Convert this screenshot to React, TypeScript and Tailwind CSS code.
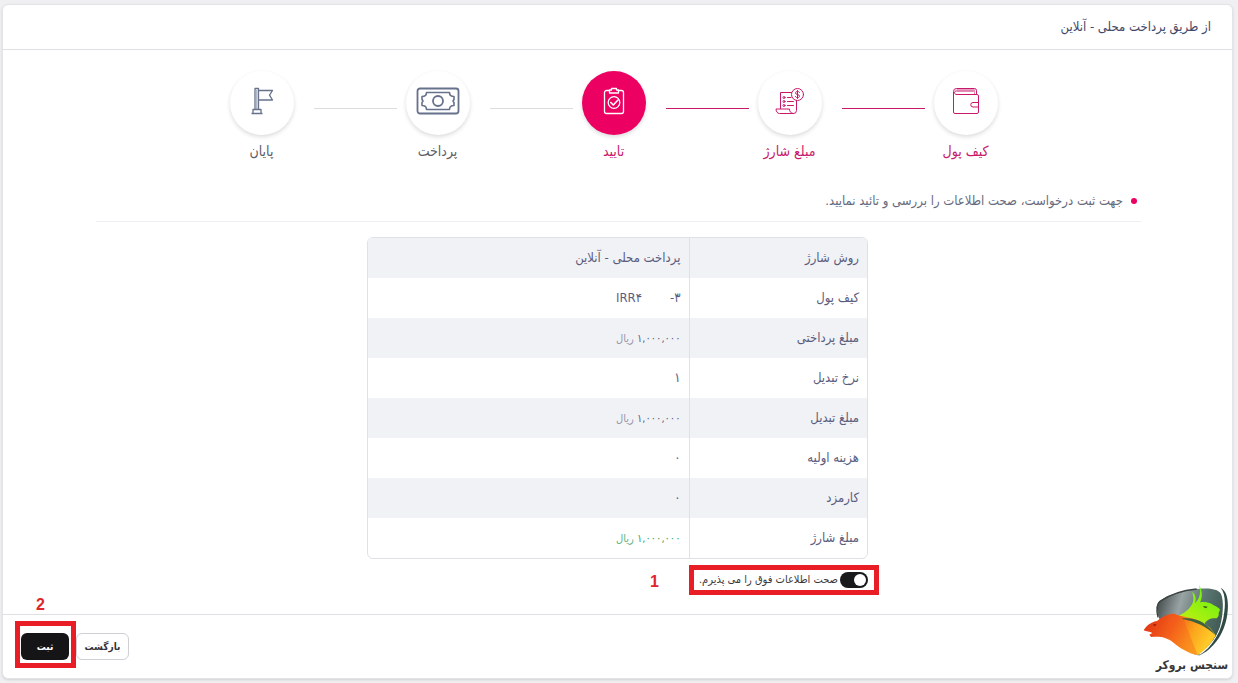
import { useState } from "react";

function WalletIcon() {
  return (
    <svg width="28" height="28" viewBox="0 0 28 28" fill="none" stroke="currentColor" strokeLinecap="round" strokeLinejoin="round">
      <path d="M24.500 6.500V3.500a2 2 0 0 0-2-2H4.500a3 3 0 0 0-3 3V25a1.500 1.500 0 0 0 1.500 1.500H25a1.500 1.500 0 0 0 1.500-1.500V9A1.500 1.500 0 0 0 25 7.500H4.500" />
      <path d="M4.500 7.500c-1.500 0-2-1-2-2s.8-1.500 2-1.500h17" />
      <path d="M5 2.700h17M22.500 3v4" strokeWidth=".5" />
      <path d="M26.500 15.500H21a2.200 2.200 0 0 0 0 4.500h5.500" />
    </svg>
  );
}

function BillIcon() {
  return (
    <svg width="30" height="28" viewBox="0 0 30 28" fill="none" stroke="currentColor" strokeLinecap="round" strokeLinejoin="round">
      <path d="M5.500 21.500V5.500h11M21.500 13.500v10a3 3 0 0 1-3 3h-14c-2.300 0-3.300-2-3.500-4.500h13.500c0 2.500 1.200 4.500 4 4.500" />
      <circle cx="22.500" cy="7.500" r="6" />
      <path d="M24.500 5.500c-.4-.7-1-1-2-1-1.200 0-2 .6-2 1.500 0 2 4 1 4 3.100 0 .9-.8 1.500-2 1.500-1 0-1.800-.4-2.100-1.200M22.500 3.500v8" />
      <path d="M12.500 10.500h3.500M12.500 14.500h6M12.500 18.500h6" />
      <circle cx="9" cy="10.500" r="1" />
      <circle cx="9" cy="14.500" r="1" />
      <circle cx="9" cy="18.500" r="1" />
    </svg>
  );
}

function ClipboardIcon() {
  return (
    <svg width="22" height="28" viewBox="0 0 22 28" fill="none" stroke="currentColor" strokeWidth="1.300" strokeLinecap="round" strokeLinejoin="round">
      <path d="M6.500 3.500H3.500a2 2 0 0 0-2 2v19a2 2 0 0 0 2 2h15a2 2 0 0 0 2-2v-19a2 2 0 0 0-2-2h-3" />
      <path d="M6.500 3h2V1.500h5V3h2v3h-9z" />
      <circle cx="11" cy="15.500" r="5.800" />
      <path d="m7.800 15.500 2.500 2.500 4.700-5" strokeWidth="1.600" />
    </svg>
  );
}

function BanknoteIcon() {
  return (
    <svg width="44" height="28" viewBox="0 0 44 28" fill="none" stroke="currentColor" strokeWidth="1.800" strokeLinejoin="round">
      <rect x="1.500" y="1.500" width="41" height="25" rx="2.500" />
      <path d="M10.500 5.500h23c0 2.700 1.300 4 4.500 4v3l-1 1.500 1 1.500v3c-3.200 0-4.500 1.300-4.500 4h-23c0-2.700-1.300-4-4.500-4v-3l1-1.500-1-1.500v-3c3.200 0 4.500-1.300 4.500-4z" strokeWidth="1.600" />
      <circle cx="22" cy="14" r="5" />
    </svg>
  );
}

function FlagIcon() {
  return (
    <svg width="24" height="28" viewBox="0 0 24 28" fill="none" stroke="currentColor" strokeWidth="1.300" strokeLinejoin="round">
      <path d="M5 22V1.500h3.500V22M1.500 26.500h11M3 26.500V22.500h8v4M8.500 3.500h14L19.500 8.200l3 4.800h-14" />
      <path d="M6.800 3v19" strokeWidth=".7" />
    </svg>
  );
}

function BrokerLogo() {
  return (
    <svg width="85" height="72" viewBox="39 27 255 216">
      <defs>
        <linearGradient id="shield" x1="0" y1=".3" x2="1" y2=".6">
          <stop offset="0" stopColor="#4a5252" />
          <stop offset=".3" stopColor="#9aa3a4" />
          <stop offset=".6" stopColor="#5c7672" />
          <stop offset="1" stopColor="#3d5750" />
        </linearGradient>
        <linearGradient id="bear" x1="0" y1="0" x2="1" y2=".3">
          <stop offset="0" stopColor="#e02a10" />
          <stop offset=".45" stopColor="#f2601a" />
          <stop offset=".75" stopColor="#fba51c" />
          <stop offset="1" stopColor="#ffc928" />
        </linearGradient>
        <linearGradient id="bull" x1="0" y1="1" x2=".7" y2="0">
          <stop offset="0" stopColor="#ffcb10" />
          <stop offset=".35" stopColor="#b8f010" />
          <stop offset="1" stopColor="#6af012" />
        </linearGradient>
      </defs>
      <path d="M88 128C80 108 78 88 86 78 96 66 150 40 210 38c32-2 54 2 62 14 10 20 8 62-2 100-14 40-36 72-66 86C160 224 110 190 88 128z" fill="url(#shield)" />
      <path d="M84 124C78 100 80 84 90 76 110 62 150 44 200 39" fill="none" stroke="#3b4343" strokeWidth="4" />
      <path d="M279 40c9 12 10 36 8 60-6 58-34 104-78 134" fill="none" stroke="#fff" strokeWidth="5" />
      <path d="M272 35c18 10 24 34 21 70-5 60-38 114-90 136 46-28 74-78 80-134 4-32 1-58-11-72z" fill="#2f4a45" />
      <path d="M124 128c24-8 46-20 56-34 10-12 14-26 6-46 12 8 14 22 8 34 14-12 20-30 13-55 12 20 10 40 3 52 12-2 24 0 34 4 8 6 20 8 26 18l-4 10c2 6-2 12-6 16-12 0-22 0-30 8-10 8-8 18 8 40l-50-36z" fill="url(#bull)" />
      <path d="M41 163C49 150 60 139 81 135 97 121 114 113 134 113c14 8 30 8 52 14 34 8 62 32 71 52-14 24-32 44-54 59-30-8-50-20-72-38-26-20-46-19-68-17l-5-7 9-5c-8-4-18-4-26-8z" fill="url(#bear)" />
      <path d="M131 200C102 172 104 130 134 113c8 6 16 7 24 9l45 116c-30-8-50-20-72-38z" fill="#f5591d" fillOpacity=".35" />
      <path d="M154 128c46-6 78 14 103 50-28-26-58-42-103-50z" fill="#3c6140" />
      <path d="m220 90 13 2-5 5-7-3z" fill="#34520e" />
      <path d="m68 146 12-3-6 8z" fill="#8c1d10" />
    </svg>
  );
}

const STEPS = [
  { label: "کیف پول", icon: WalletIcon, state: "done" },
  { label: "مبلغ شارژ", icon: BillIcon, state: "done" },
  { label: "تایید", icon: ClipboardIcon, state: "active" },
  { label: "پرداخت", icon: BanknoteIcon, state: "todo" },
  { label: "پایان", icon: FlagIcon, state: "todo" },
];

const CIRCLE_STYLES: Record<string, string> = {
  done: "bg-white text-[#c8186a]",
  active: "bg-[#ec0062] text-white",
  todo: "bg-white text-[#66718c]",
};

const ROWS = [
  { label: "روش شارژ", value: "پرداخت محلی - آنلاین" },
  { label: "کیف پول", wallet: ["IRR۴", "-۳"] },
  { label: "مبلغ پرداختی", value: "۱,۰۰۰,۰۰۰", unit: true },
  { label: "نرخ تبدیل", value: "۱" },
  { label: "مبلغ تبدیل", value: "۱,۰۰۰,۰۰۰", unit: true },
  { label: "هزینه اولیه", value: "۰" },
  { label: "کارمزد", value: "۰" },
  { label: "مبلغ شارژ", value: "۱,۰۰۰,۰۰۰", unit: true, total: true },
];

function Stepper() {
  return (
    <ol className="flex justify-center pr-2">
      {STEPS.map((step, i) => {
        const Icon = step.icon;
        return (
          <li key={step.label} className="flex">
            {i > 0 && (
              <span className={`mt-[37px] mr-[9px] ml-5 h-px w-[83px] ${step.state === "todo" ? "bg-[#dddddf]" : "bg-[#c8186a]"}`} />
            )}
            <div className="flex w-16 flex-col items-center">
              <span className={`flex size-16 items-center justify-center rounded-full pb-1 shadow-[0_2px_4px_rgba(0,0,0,0.14)] ${CIRCLE_STYLES[step.state]}`}>
                <Icon />
              </span>
              <span className={`mt-1.5 whitespace-nowrap text-[14px] leading-5 ${step.state === "todo" ? "text-[#5c5e66]" : "text-[#c8186a]"}`}>
                {step.label}
              </span>
            </div>
          </li>
        );
      })}
    </ol>
  );
}

function SummaryTable() {
  return (
    <div className="mx-auto mt-[15px] w-full max-w-[501px] overflow-hidden rounded-md border border-[#dfe1e6]">
      <table className="w-full table-fixed text-[13px] text-[#5b5d7e]">
        <tbody>
          {ROWS.map((row, i) => (
            <tr key={i} className="h-10 odd:bg-[#f1f2f6]">
              <th scope="row" className="w-[178px] border-l border-[#dfe1e6] px-2 text-right font-normal">{row.label}</th>
              <td className="px-2 text-right">
                {row.wallet ? (
                  <span dir="ltr" className="inline-flex gap-7">
                    <span>{row.wallet[0]}</span>
                    <span>{row.wallet[1]}</span>
                  </span>
                ) : (
                  <span className={`${row.unit ? "text-[11px]" : ""} ${row.total ? "text-[#36a566]" : ""}`}>{row.value}</span>
                )}
                {row.unit && <span className={`text-[11px] ${row.total ? "text-[#5fb583]" : "text-[#9798a8]"}`}> ریال</span>}
              </td>
            </tr>
          ))}
        </tbody>
      </table>
    </div>
  );
}

export default function App() {
  const [accepted, setAccepted] = useState(true);

  return (
    <div dir="rtl" className="min-h-screen bg-[#f0f0f3] pt-1 pr-[5px] pb-1 pl-[2px] font-['DejaVu_Sans_Condensed','DejaVu_Sans',sans-serif]">
      <main className="relative rounded-md border border-[#e3e4e8] bg-white shadow-sm">
        <header className="border-b border-[#dfe0e4] px-[21px] py-3">
          <h1 className="text-[13px] leading-5 text-[#3f4868]">از طریق پرداخت محلی - آنلاین</h1>
        </header>

        <section className="pt-[21px] pb-[26px]">
          <Stepper />

          <div className="mr-[91px] ml-[93px] mt-[30px] flex items-center gap-2 border-b border-[#eeeff2] pr-1 pb-2.5">
            <span className="size-1.5 rounded-full bg-[#ec0062]" />
            <p className="text-[13px] leading-5 text-[#666b7d]">جهت ثبت درخواست، صحت اطلاعات را بررسی و تائید نمایید.</p>
          </div>

          <SummaryTable />

          <div className="mx-auto mt-[13px] flex w-full max-w-[501px]">
            <div className="relative">
              <label className="flex items-center gap-[2px] text-[11px] leading-4 text-[#37383e]">
                <input
                  type="checkbox"
                  checked={accepted}
                  onChange={e => setAccepted(e.target.checked)}
                  className="relative h-4 w-7 appearance-none rounded-full bg-[#c5c6cc] after:absolute after:top-[2px] after:left-[2px] after:size-3 after:rounded-full after:bg-white checked:bg-[#181a1c] checked:after:left-[14px]"
                />
                صحت اطلاعات فوق را می پذیرم.
              </label>
              {/* Step marker */}
              <div className="pointer-events-none absolute -top-[7px] -right-[11px] h-[30px] w-[190px] border-5 border-[#e91d25]" />
              <span className="absolute top-0 right-[209px] font-['Liberation_Sans',sans-serif] text-[16px] leading-5 font-bold text-[#e0252b]">1</span>
            </div>
          </div>
        </section>

        <footer className="flex justify-end gap-[7px] border-t border-[#dfe0e4] py-[18px] pl-[18px]">
          <button type="button" className="h-[27px] w-[53px] rounded-md border border-[#cfd0d4] bg-white text-[10px] font-bold text-[#333338]">بازگشت</button>
          <div className="relative">
            <button type="button" className="h-[27px] w-12 rounded-md bg-[#151517] text-[10px] font-bold text-white">ثبت</button>
            <div className="pointer-events-none absolute -top-3 -left-[6px] h-[47px] w-[61px] border-5 border-[#e91d25]" />
            <span className="absolute -top-[38px] left-[15px] font-['Liberation_Sans',sans-serif] text-[16px] leading-5 font-bold text-[#e0252b]">2</span>
          </div>
        </footer>

        {/* Watermark */}
        <div className="absolute right-1 bottom-1 flex flex-col items-start">
          <BrokerLogo />
          <span className="whitespace-nowrap text-[12px] leading-[17px] font-bold text-[#37383a]">سنجس بروکر</span>
        </div>
      </main>
    </div>
  );
}
